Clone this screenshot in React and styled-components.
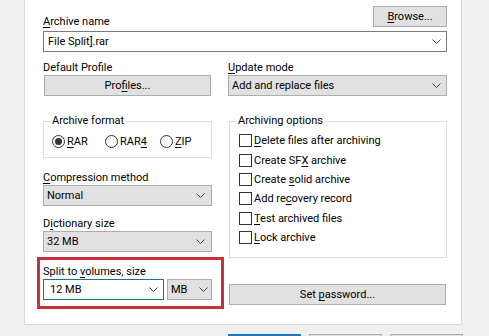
import React from 'react'
import styled, { createGlobalStyle } from 'styled-components'

const GlobalStyle = createGlobalStyle`
  html, body {
    margin: 0;
    padding: 0;
    background: #f0f0f0;
  }
  body {
    font-family: Roboto, 'Noto Sans', sans-serif;
    font-size: 11px;
    color: #000;
    overflow: hidden;
  }
`

const Chevron = () => (
  <svg width='9' height='5' viewBox='0 0 9 5'>
    <path d='M0.5 0.5 L4.5 4.5 L8.5 0.5' fill='none' stroke='#444' strokeWidth='1' />
  </svg>
)

const Combo = ({ value, editable, focus, pl, pr }) => (
  <ComboBox $editable={editable} $focus={focus} $pl={pl} $pr={pr}>
    <span>{value}</span>
    <Chevron />
  </ComboBox>
)

const Radio = ({ checked, children, width }) => (
  <RadioItem $w={width}>
    <RadioCircle>{checked && <RadioDot />}</RadioCircle>
    <span>{children}</span>
  </RadioItem>
)

const Check = ({ children }) => (
  <CheckRow>
    <CheckBox />
    <span>{children}</span>
  </CheckRow>
)

const App = () => {
  return (
    <Window>
      <GlobalStyle />
      <Panel>
        <TopRow>
          <Label>
            <U>A</U>rchive name
          </Label>
          <Button $w={74}>
            <span>
              <U>B</U>rowse...
            </span>
          </Button>
        </TopRow>
        <NameField>
          <Combo value='File Split].rar' editable pl={4} pr={5} />
        </NameField>

        <Columns>
          <Column>
            <FieldLabel>Default Profile</FieldLabel>
            <Button $w={167} $ml={1}>
              <span>
                Pro<U>f</U>iles...
              </span>
            </Button>
          </Column>
          <Column>
            <FieldLabel>
              <U>U</U>pdate mode
            </FieldLabel>
            <Combo value='Add and replace files' pl={3} pr={5} />
          </Column>
        </Columns>

        <Columns $mt={18}>
          <Column>
            <Group>
              <Legend>Archive format</Legend>
              <RadioRow>
                <Radio checked width={53}>
                  <U>R</U>AR
                </Radio>
                <Radio width={55}>
                  RAR<U>4</U>
                </Radio>
                <Radio>
                  <U>Z</U>IP
                </Radio>
              </RadioRow>
            </Group>

            <FieldLabel $mt={12}>
              <U>C</U>ompression method
            </FieldLabel>
            <Combo value='Normal' pl={3} pr={6} />

            <FieldLabel $mt={10}>
              D<U>i</U>ctionary size
            </FieldLabel>
            <Combo value='32 MB' pl={3} pr={6} />

            <Highlight>
              <FieldLabel>
                Split to <U>v</U>olumes, size
              </FieldLabel>
              <SplitRow>
                <SizeWrap>
                  <Combo value='12 MB' editable focus pl={6} pr={5} />
                </SizeWrap>
                <UnitWrap>
                  <Combo value='MB' pl={3} pr={3} />
                </UnitWrap>
              </SplitRow>
            </Highlight>
          </Column>

          <Column>
            <Group $ml={1} $pt={3} $pb={10}>
              <Legend>Archiving options</Legend>
              <Check>
                <U>D</U>elete files after archiving
              </Check>
              <Check>
                Create SF<U>X</U> archive
              </Check>
              <Check>
                Create <U>s</U>olid archive
              </Check>
              <Check>
                Add re<U>c</U>overy record
              </Check>
              <Check>
                <U>T</U>est archived files
              </Check>
              <Check>
                <U>L</U>ock archive
              </Check>
            </Group>
            <Button $w={217} $ml={1} $mt={26}>
              <span>
                Set <U>p</U>assword...
              </span>
            </Button>
          </Column>
        </Columns>
      </Panel>

      <Footer>
        <FooterButton $primary />
        <FooterButton />
        <FooterButton />
      </Footer>
    </Window>
  )
}

const Window = styled.div`
  width: 489px;
  height: 336px;
  overflow: hidden;
  padding-left: 24px;
  box-sizing: border-box;
`
const Panel = styled.div`
  width: 438px;
  box-sizing: border-box;
  background: #fff;
  border: 1px solid #dadada;
  border-top: none;
  padding: 6px 14px 15px 18px;
`
const U = styled.span`
  text-decoration: underline;
  text-underline-offset: 2px;
`
const Label = styled.div`
  line-height: 15px;
  margin-bottom: -2px;
`
const FieldLabel = styled.div`
  line-height: 15px;
  margin-top: ${p => p.$mt || 0}px;
`
const TopRow = styled.div`
  display: flex;
  justify-content: space-between;
  align-items: flex-end;
`
const Button = styled.div`
  display: flex;
  align-items: center;
  justify-content: center;
  box-sizing: border-box;
  width: ${p => p.$w}px;
  height: 21px;
  margin-left: ${p => p.$ml || 0}px;
  margin-top: ${p => p.$mt || 0}px;
  background: #e1e1e1;
  border: 1px solid #adadad;
  white-space: pre;
`
const NameField = styled.div`
  margin-top: 4px;
  margin-bottom: 8px;
`
const ComboBox = styled.div`
  display: flex;
  align-items: center;
  justify-content: space-between;
  box-sizing: border-box;
  height: 21px;
  background: ${p => (p.$editable ? '#fff' : '#e1e1e1')};
  border: 1px solid ${p => (p.$focus ? '#1b6f8c' : p.$editable ? '#7a7a7a' : '#adadad')};
  padding: 0 ${p => p.$pr}px 0 ${p => p.$pl}px;
  white-space: nowrap;
`
const Columns = styled.div`
  display: grid;
  grid-template-columns: 169px 219px;
  column-gap: 16px;
  margin-top: ${p => p.$mt || 0}px;
  align-items: start;
`
const Column = styled.div`
  display: flex;
  flex-direction: column;
`
const Group = styled.fieldset`
  margin: 0 0 0 ${p => p.$ml || 0}px;
  min-width: 0;
  border: 1px solid #dcdcdc;
  padding: ${p => p.$pt || 5}px 6px ${p => p.$pb || 8}px 6px;
`
const Legend = styled.legend`
  padding: 0 2px;
  line-height: 14px;
`
const RadioRow = styled.div`
  display: flex;
  align-items: center;
  padding-left: 2px;
  height: 16px;
`
const RadioItem = styled.div`
  display: flex;
  align-items: center;
  gap: 2px;
  width: ${p => (p.$w ? `${p.$w}px` : 'auto')};
`
const RadioCircle = styled.div`
  display: flex;
  align-items: center;
  justify-content: center;
  width: 13px;
  height: 13px;
  box-sizing: border-box;
  border: 1px solid #333;
  border-radius: 50%;
  background: #fff;
`
const RadioDot = styled.div`
  width: 7px;
  height: 7px;
  border-radius: 50%;
  background: #333;
`
const CheckRow = styled.div`
  display: flex;
  align-items: center;
  gap: 2px;
  height: 19.4px;
  padding-left: 3px;
`
const CheckBox = styled.div`
  width: 13px;
  height: 13px;
  box-sizing: border-box;
  border: 1px solid #333;
  background: #fff;
  flex: none;
`
const Highlight = styled.div`
  margin: 5px -12px 0 -6px;
  padding: 4px 9px 6px 3px;
  border: 3px solid #c8313b;
`
const SplitRow = styled.div`
  display: flex;
  gap: 3px;
`
const SizeWrap = styled.div`
  width: 121px;
`
const UnitWrap = styled.div`
  width: 45px;
`
const Footer = styled.div`
  display: flex;
  gap: 8px;
  padding-left: 204px;
  margin-top: 9px;
`
const FooterButton = styled.div`
  width: 73px;
  height: 22px;
  box-sizing: border-box;
  background: #e1e1e1;
  border: ${p => (p.$primary ? '2px solid #1c78c0' : '1px solid #adadad')};
`

export default App
